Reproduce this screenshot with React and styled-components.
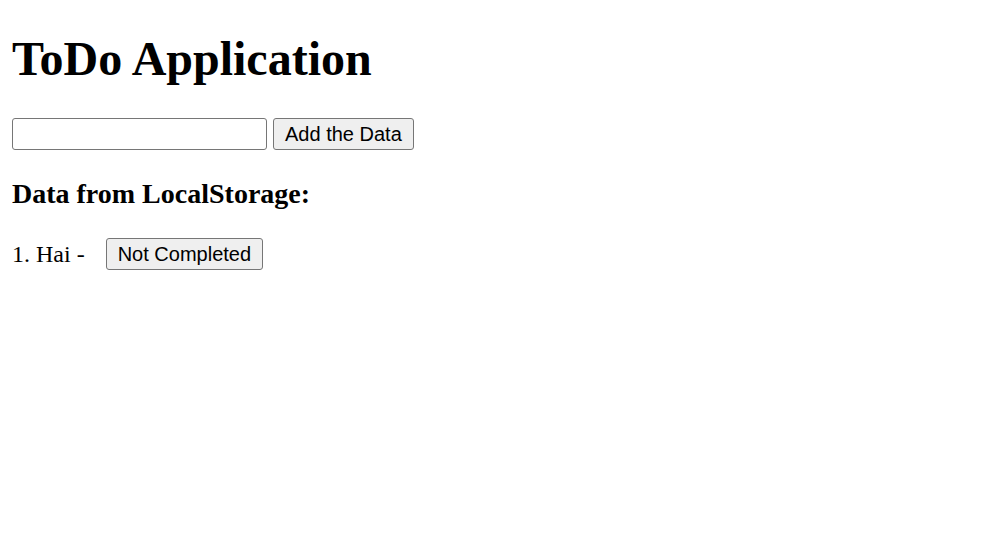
import React, { useState } from "react"
import styled, { createGlobalStyle } from "styled-components"

const GlobalStyle = createGlobalStyle`
	body {
		margin: 12px;
		font-family: "Liberation Serif", "Times New Roman", serif;
		font-size: 24px;
		color: #000;
		background: #fff;
	}
`

const App = () => {
	const [inputData, setInputData] = useState("")
	const [items, setItems] = useState([{ text: "Hai", completed: false }])

	const addData = () => {
		if (inputData === "") return
		setItems([...items, { text: inputData, completed: false }])
		setInputData("")
	}

	const toggleItem = (index) => {
		setItems(items.map((item, i) => (i === index ? { ...item, completed: !item.completed } : item)))
	}

	return (
		<>
			<GlobalStyle />
			<Title>ToDo Application</Title>
			<InputRow>
				<DataInput value={inputData} onChange={(e) => setInputData(e.target.value)} />
				<ActionButton onClick={addData}>Add the Data</ActionButton>
			</InputRow>
			<SubTitle>Data from LocalStorage:</SubTitle>
			{items.map((item, index) => (
				<ItemRow key={index}>
					{index + 1}. {item.text} -
					<StatusButton onClick={() => toggleItem(index)}>
						{item.completed ? "Completed" : "Not Completed"}
					</StatusButton>
				</ItemRow>
			))}
		</>
	)
}

const Title = styled.h1`
	font-size: 48px;
	font-weight: bold;
	margin: 19px 0 32px;
	line-height: 55px;
`

const InputRow = styled.div`
	display: flex;
	align-items: center;
	gap: 6px;
	height: 32px;
`

const DataInput = styled.input`
	box-sizing: border-box;
	width: 255px;
	height: 32px;
	border: 1px solid #767676;
	border-radius: 3px;
	padding: 2px 3px;
	font-family: "Liberation Sans", Arial, sans-serif;
	font-size: 20px;
	background: #fff;
`

const ActionButton = styled.button`
	box-sizing: border-box;
	height: 32px;
	padding: 1px 11px;
	border: 1px solid #767676;
	border-radius: 3px;
	background: #efefef;
	font-family: "Liberation Sans", Arial, sans-serif;
	font-size: 20px;
	color: #000;
	cursor: pointer;
`

const SubTitle = styled.h3`
	font-size: 28px;
	font-weight: bold;
	margin: 28px 0;
	line-height: 32px;
`

const ItemRow = styled.div`
	display: flex;
	align-items: center;
	height: 32px;
	white-space: pre;
`

const StatusButton = styled(ActionButton)`
	margin-left: 21px;
`

export default App
